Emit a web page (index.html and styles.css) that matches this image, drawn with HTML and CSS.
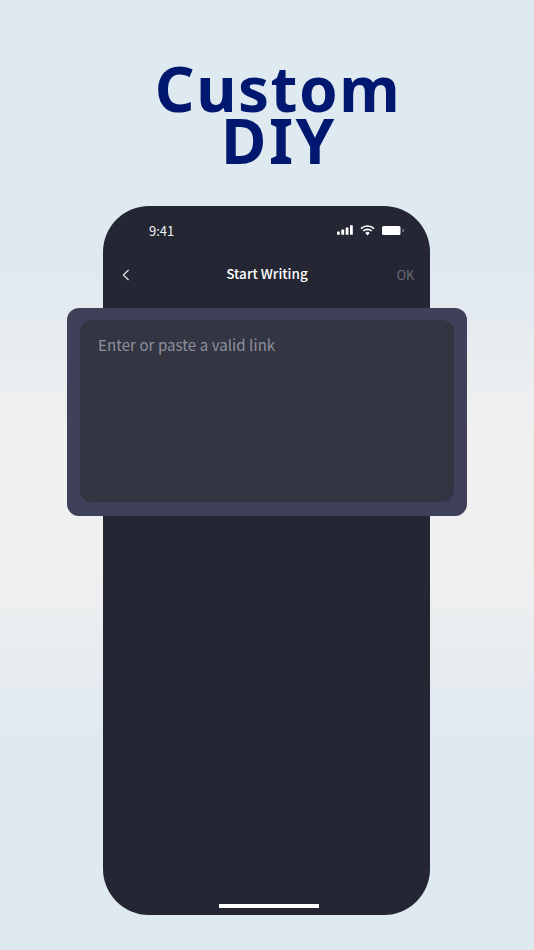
FILE: index.html
```html
<!DOCTYPE html>
<html lang="en">
<head>
<meta charset="utf-8">
<title>Custom DIY</title>
<link rel="stylesheet" href="styles.css">
</head>
<body>
<main class="page">
  <h1 class="title"><span class="title-line">Custom</span><span class="title-line title-line-second">DIY</span></h1>
  <section class="phone">
    <div class="status">
      <span class="time">9:41</span>
      <span class="status-icons">
        <svg class="signal" width="16" height="10" viewBox="0 0 17 10"><rect x="0" y="6.5" width="3" height="3.5" rx=".6"/><rect x="4.6" y="4.6" width="3" height="5.4" rx=".6"/><rect x="9.2" y="2.4" width="3" height="7.6" rx=".6"/><rect x="13.8" y="0" width="3" height="10" rx=".6"/></svg>
        <svg class="wifi" width="15" height="11" viewBox="0 0 15 11"><path d="M1 3.6a9.4 9.4 0 0 1 13 0M3.3 6a6 6 0 0 1 8.4 0" fill="none" stroke="#fff" stroke-width="1.7"/><path d="M5.3 7.9a3.2 3.2 0 0 1 4.4 0L7.5 10.4z" fill="#fff"/></svg>
        <svg class="battery" width="22" height="9" viewBox="0 0 22 9"><rect x="0" y="0" width="18.5" height="9" rx="1.5"/><rect x="20.5" y="3" width="1.2" height="3" rx=".5" opacity=".5"/></svg>
      </span>
    </div>
    <header class="nav">
      <svg class="back" width="8" height="12" viewBox="0 0 8 12"><path d="M6.6 1 1.4 6l5.2 5" fill="none" stroke="#e8e8ec" stroke-width="1.2"/></svg>
      <span class="nav-title">Start Writing</span>
      <span class="ok">OK</span>
    </header>
    <div class="card">
      <div class="field"><span class="placeholder">Enter or paste a valid link</span></div>
    </div>
    <div class="spacer"></div>
    <div class="home-bar"></div>
  </section>
</main>
</body>
</html>
```
FILE: styles.css
```css
* { box-sizing: border-box; }
html, body { margin: 0; padding: 0; }
body {
  width: 534px;
  height: 950px;
  overflow: hidden;
  background: linear-gradient(180deg, #dfe9f0 0, #dfe9f0 270px, #f0f0f0 430px, #f0f0f0 570px, #dfe9f0 740px, #dfe9f0 950px);
  font-family: "Noto Sans CJK SC", "Noto Sans", sans-serif;
}
.page {
  display: flex;
  flex-direction: column;
  align-items: center;
  padding-top: 62px;
}
.title {
  margin: 0 0 0 22px;
  display: flex;
  flex-direction: column;
  align-items: center;
  font-family: "Noto Sans", sans-serif;
  font-weight: 700;
  font-size: 62px;
  line-height: 52px;
  color: #00186f;
  letter-spacing: 1.5px;
}
.title-line-second { letter-spacing: 2.5px; margin-left: 2px; }
.phone {
  width: 327px;
  height: 709px;
  margin: 40px 1px 0 0;
  background: #242633;
  border-radius: 46px;
  display: flex;
  flex-direction: column;
  color: #fff;
}
.status {
  height: 50px;
  padding: 0 26px 2px 46px;
  display: flex;
  justify-content: space-between;
  align-items: center;
}
.time { font-size: 13px; color: #f0f0f2; }
.status-icons { display: flex; align-items: center; gap: 6px; }
.status-icons svg { fill: #fff; display: block; }
.signal { margin-right: 1px; }
.wifi { margin-right: 1px; }
.nav {
  height: 38px;
  margin-bottom: 14px;
  padding: 0 16px 0 19px;
  display: grid;
  grid-template-columns: 1fr auto 1fr;
  align-items: center;
}
.nav-title {
  margin: -5px 0 0 -2px;
  font-size: 13.5px;
  font-weight: 500;
  line-height: 22px;
}
.ok { justify-self: end; font-size: 12.5px; line-height: 18px; margin-top: -1px; color: #6b6d79; }
.card {
  margin: 0 -37px 0 -36px;
  height: 208px;
  padding: 12px 13px 14px;
  background: #3f405a;
  border-radius: 12px;
}
.field {
  height: 100%;
  background: #343542;
  border-radius: 12px;
  padding: 12px 18px;
}
.placeholder { font-size: 15px; line-height: 24px; color: #8e8f9e; letter-spacing: .08px; }
.spacer { flex: 1; }
.home-bar {
  width: 100px;
  height: 4px;
  margin: 0 0 7px 115.5px;
  background: #fff;
}
```
